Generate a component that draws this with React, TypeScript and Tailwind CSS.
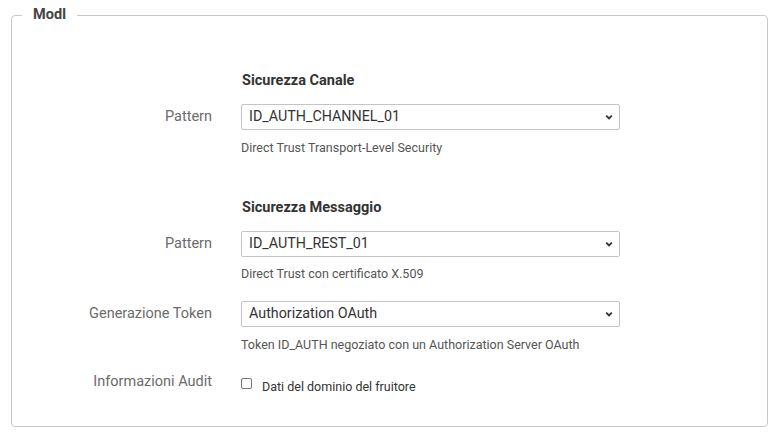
import React from "react";

function Chevron() {
  return (
    <svg
      className="pointer-events-none absolute right-[6px] top-1/2 -translate-y-1/2"
      width="10"
      height="10"
      viewBox="0 0 10 10"
    >
      <path d="M2.2 3.6 L5 6.4 L7.8 3.6" fill="none" stroke="#333" strokeWidth="1.8" />
    </svg>
  );
}

function Select({ value }: { value: string }) {
  return (
    <div className="relative h-[26px] w-[379px]">
      <select
        defaultValue={value}
        className="h-full w-full appearance-none rounded-[2px] border border-[#c4c4c4] bg-white pl-[7px] text-[14.3px] text-[#333] outline-none"
      >
        <option>{value}</option>
      </select>
      <Chevron />
    </div>
  );
}

function Row({ label, children }: { label: string; children: React.ReactNode }) {
  return (
    <div className="flex items-center">
      <div className="w-[200px] text-right text-[14.5px] leading-5 text-[#6b6b6b]">{label}</div>
      <div className="ml-[29px]">{children}</div>
    </div>
  );
}

function Heading({ children }: { children: React.ReactNode }) {
  return (
    <div className="ml-[230px] text-[14.5px] font-bold leading-5 text-[#333]">{children}</div>
  );
}

function Help({ children }: { children: React.ReactNode }) {
  return (
    <div className="ml-[229px] text-[12.5px] leading-4 text-[#555]">{children}</div>
  );
}

export default function App() {
  return (
    <div
      className="h-[436px] w-[780px] bg-white pt-[5px]"
      style={{ fontFamily: "Roboto, 'Liberation Sans', sans-serif" }}
    >
      <fieldset className="mx-[11px] w-[757px] rounded-[4px] border border-[#c8c8c8] pb-[31px] pl-[10px]">
        <legend className="px-[11px] text-[14.5px] font-bold leading-5 text-[#444]">ModI</legend>
        <div className="-ml-[10px] flex flex-col">
          <div className="mt-[46px]">
            <Heading>Sicurezza Canale</Heading>
          </div>
          <div className="mt-[13px]">
            <Row label="Pattern">
              <Select value="ID_AUTH_CHANNEL_01" />
            </Row>
          </div>
          <div className="mt-[10px]">
            <Help>Direct Trust Transport-Level Security</Help>
          </div>
          <div className="mt-[42px]">
            <Heading>Sicurezza Messaggio</Heading>
          </div>
          <div className="mt-[13px]">
            <Row label="Pattern">
              <Select value="ID_AUTH_REST_01" />
            </Row>
          </div>
          <div className="mt-[9px]">
            <Help>Direct Trust con certificato X.509</Help>
          </div>
          <div className="mt-[19px]">
            <Row label="Generazione Token">
              <Select value="Authorization OAuth" />
            </Row>
          </div>
          <div className="mt-[10px]">
            <Help>Token ID_AUTH negoziato con un Authorization Server OAuth</Help>
          </div>
          <div className="mt-[19px] flex items-start">
            <div className="w-[200px] text-right text-[14.5px] leading-5 text-[#6b6b6b]">
              Informazioni Audit
            </div>
            <label className="ml-[29px] flex items-start gap-[10px]">
              <span className="mt-[6px] inline-block h-[11px] w-[11px] rounded-[2px] border border-[#767676] bg-white" />
              <span className="mt-[7px] text-[12.5px] leading-4 text-[#333]">Dati del dominio del fruitore</span>
            </label>
          </div>
        </div>
      </fieldset>
    </div>
  );
}
